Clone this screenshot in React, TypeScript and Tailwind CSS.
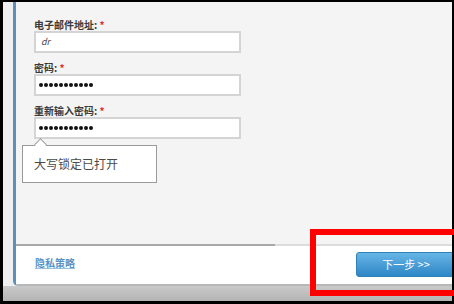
function Dots() {
  return (
    <div className="flex gap-[1px]">
      {Array.from({ length: 11 }).map((_, i) => (
        <span key={i} className="w-[4px] h-[4px] rounded-full bg-[#111]" />
      ))}
    </div>
  );
}

export default function App() {
  const font = { fontFamily: '"Noto Sans CJK SC", "Liberation Sans", sans-serif' };

  return (
    <div
      className="relative w-[454px] h-[304px] overflow-hidden bg-black pt-[2px] pl-[3px] pr-[2px] pb-[3px]"
      style={font}
    >
      <div className="flex flex-col h-full bg-gradient-to-r from-[#cfcfcf] via-[#e2e2e2] to-[#d4d4d4]">
        {/* Window body */}
        <div className="flex h-[284px] pl-[10px] bg-gradient-to-r from-[#f0f0f0] to-[#e6e6e6]">
          <div className="flex flex-col flex-1 overflow-hidden border-l-[3px] border-[#5f8fba] rounded-bl-[5px] shadow-[inset_1px_0_0_#b7d2e8]">
            {/* Form area */}
            <div className="flex flex-col h-[242px] bg-[#f4f4f4] pl-[18px] pt-[17px]">
              <div className="flex flex-col gap-[9px]">
                <div className="flex flex-col">
                  <div className="h-[12px] text-[10px] leading-[12px] font-bold text-[#3a3a3a]">
                    电子邮件地址: <span className="text-[#e03030]">*</span>
                  </div>
                  <div className="w-[207px] h-[22px] bg-white border-2 border-[#d4d4d4] flex items-center pl-[5px]">
                    <span className="text-[9px] italic text-[#444]">dr</span>
                  </div>
                </div>
                <div className="flex flex-col">
                  <div className="h-[12px] text-[10px] leading-[12px] font-bold text-[#3a3a3a]">
                    密码: <span className="text-[#e03030]">*</span>
                  </div>
                  <div className="w-[207px] h-[22px] bg-white border-2 border-[#d4d4d4] flex items-center pl-[3px]">
                    <Dots />
                  </div>
                </div>
                <div className="flex flex-col">
                  <div className="h-[12px] text-[10px] leading-[12px] font-bold text-[#3a3a3a]">
                    重新输入密码: <span className="text-[#e03030]">*</span>
                  </div>
                  <div className="w-[207px] h-[22px] bg-white border-2 border-[#d4d4d4] flex items-center pl-[3px]">
                    <Dots />
                  </div>
                </div>
              </div>

              {/* Caps lock tooltip */}
              <div className="relative mt-[6px] ml-[-12px] w-[135px] h-[38px] bg-white border-[1.5px] border-[#9a9a9a] flex items-center pl-[11px]">
                <div className="absolute left-[13px] top-[-6px] w-[9px] h-[9px] bg-white border-l-[1.5px] border-t-[1.5px] border-[#9a9a9a] rotate-45" />
                <span className="text-[12px] text-[#4a4a4a]">大写锁定已打开</span>
              </div>
            </div>

            {/* Separator */}
            <div className="flex h-[2px]">
              <div className="w-[259px] bg-[#a9a9a9]" />
              <div className="flex-1 bg-[#dcdcdc]" />
            </div>

            {/* Footer */}
            <div className="flex items-center justify-between flex-1 bg-white border-b-2 border-[#b8b8b8] pl-[19px]">
              <span className="text-[10px] font-bold text-[#5a92c4] underline decoration-[#9cc0e0] mt-[-6px]">
                隐私策略
              </span>
              <div className="w-[100px] h-[25px] mr-[-4px] mt-[-1px] rounded-[3px] bg-gradient-to-b from-[#66b6e6] to-[#2c86c6] border border-[#2f7fb8] flex items-center justify-center">
                <span className="text-[11px] text-white">下一步 &gt;&gt;</span>
              </div>
            </div>
          </div>
        </div>

        {/* Bottom edge */}
        <div className="flex-1 bg-gradient-to-b from-[#c9c9c9] to-[#b4b4b4]" />
      </div>

      {/* Red annotation box */}
      <div className="absolute left-[310px] top-[229px] w-[160px] h-[67px] border-[6px] border-[#ff0000]" />
    </div>
  );
}
